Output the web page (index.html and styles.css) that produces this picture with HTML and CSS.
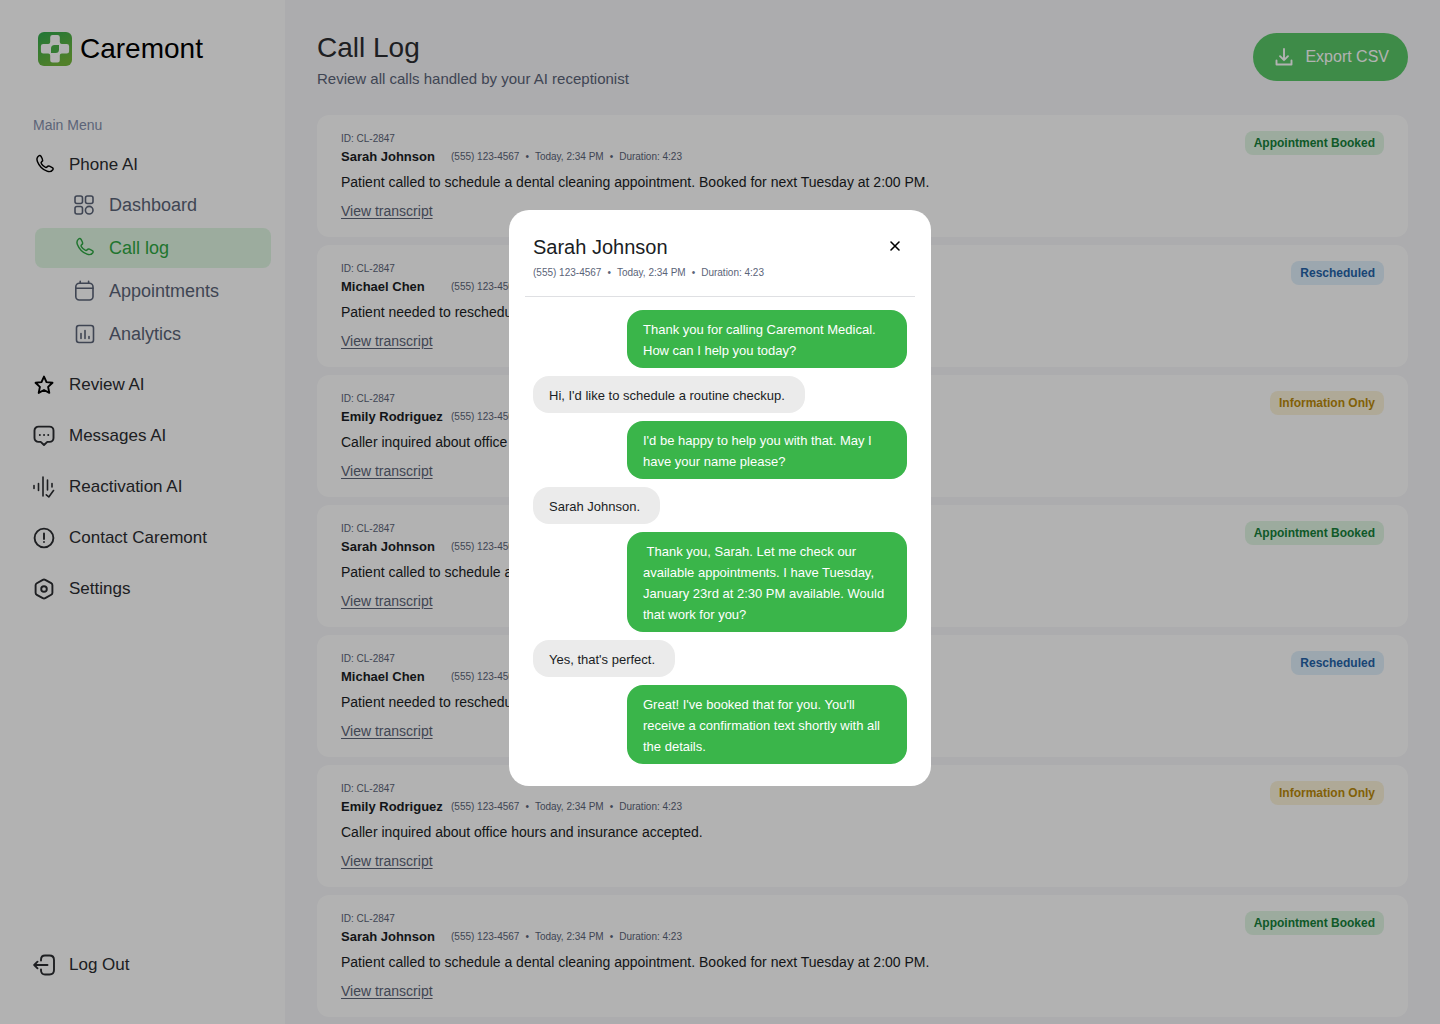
FILE: index.html
```html
<!DOCTYPE html>
<html lang="en">
<head>
<meta charset="utf-8">
<meta name="viewport" content="width=device-width, initial-scale=1">
<title>Caremont – Call Log</title>
<link rel="stylesheet" href="styles.css">
</head>
<body>
<svg class="sprite" aria-hidden="true">
  <symbol id="phone" viewBox="-2 0.5 24 24"><path d="M7.6 8.9C6.9 9.4 6.6 10.100 7.100 10.900C8.300 12.900 9.900 14.300 11.700 15.100C12.500 15.400 13 15.100 13.500 14.400C14.200 13.500 15 13.300 16 13.800L19 15.300C20 15.800 20.200 16.800 19.600 17.700C18.200 19.600 15.900 20.200 13.300 19.200C8.500 17.400 4.700 13.500 2.800 8.600C1.900 6.200 2.300 4.100 4.100 2.700C5.200 1.900 6.200 2.100 6.800 3.200L8.100 5.700C8.700 6.900 8.600 8.100 7.600 8.900Z"/></symbol>
</svg>

<div class="app">
  <aside class="sidebar">
    <a class="brand" href="#">
      <svg class="brand-mark" viewBox="0 0 34 34" aria-hidden="true">
        <defs><linearGradient id="leaf" x1="0" y1="0" x2="0.5" y2="1"><stop offset="0" stop-color="#2faa4e"/><stop offset="1" stop-color="#74b83c"/></linearGradient></defs>
        <rect width="34" height="34" rx="6" fill="url(#leaf)"/>
        <path fill="#fff" d="M14.500 3h5a2.300 2.300 0 0 1 2.300 2.300v4.700a2 2 0 0 0 2 2h5a2.300 2.300 0 0 1 2.300 2.300v5a2.300 2.300 0 0 1-2.300 2.300h-5a2 2 0 0 0-2 2v4.700a2.300 2.300 0 0 1-2.300 2.300h-5a2.300 2.300 0 0 1-2.300-2.300v-4.700a2 2 0 0 0-2-2h-5a2.300 2.300 0 0 1-2.300-2.300v-5a2.300 2.300 0 0 1 2.300-2.300h5a2 2 0 0 0 2-2V5.300a2.300 2.300 0 0 1 2.300-2.300z"/>
        <path fill="#4cb04a" d="M16.500 13h4.500v4.500a3.500 3.500 0 0 1-3.500 3.500H13v-4.500a3.500 3.500 0 0 1 3.500-3.500z"/>
      </svg>
      <span>Caremont</span>
    </a>

    <p class="menu-label">Main Menu</p>
    <nav class="nav" aria-label="Main Menu">
      <div class="nav-group">
        <a class="nav-item" href="#"><svg class="icon dark" viewBox="0 0 22 22"><use href="#phone"/></svg>Phone AI</a>
        <div class="subnav">
          <a class="sub-item" href="#"><svg class="icon" viewBox="0 0 22 22"><rect x="2" y="2" width="7.500" height="7.500" rx="2"/><rect x="12.500" y="2" width="7.500" height="7.500" rx="2"/><rect x="2" y="12.500" width="7.500" height="7.500" rx="2"/><circle cx="16.200" cy="16.200" r="3.800"/></svg>Dashboard</a>
          <a class="sub-item active" href="#" aria-current="page"><svg class="icon" viewBox="0 0 22 22"><use href="#phone"/></svg>Call log</a>
          <a class="sub-item" href="#"><svg class="icon" viewBox="0 0 22 22"><rect x="2.800" y="3.200" width="17.200" height="16.800" rx="3.500"/><path d="M3 8.200h17M7.200 1.200v2M15.600 1.200v2"/></svg>Appointments</a>
          <a class="sub-item" href="#"><svg class="icon" viewBox="0 0 22 22"><rect x="3.500" y="2.500" width="17" height="17" rx="2.500"/><path d="M8 10.500v5M12 7.500v8M16 13.500v2"/></svg>Analytics</a>
        </div>
      </div>
      <a class="nav-item" href="#"><svg class="icon dark bold" viewBox="0 0 22 22"><path d="M11 2.600l2.500 5.500 6 .7-4.400 4.100 1.200 6L11 16l-5.300 2.900 1.200-6L2.500 8.800l6-.7z"/></svg>Review AI</a>
      <a class="nav-item" href="#"><svg class="icon bold" viewBox="0 0 22 22"><path d="M5.500 1.600h11a4 4 0 0 1 4 4v7.300a4 4 0 0 1-4 4h-2.200L11 20l-3.300-3.100H5.500a4 4 0 0 1-4-4V5.600a4 4 0 0 1 4-4z"/><path d="M6.800 10h.1M11 10h.1M15.200 10h.1"/></svg>Messages AI</a>
      <a class="nav-item" href="#"><svg class="icon" viewBox="0 0 22 22"><path d="M1 9.500v3M5.500 7.500v7M10 1v19M14.500 4v10M19 7.500v3.500M13.300 18.800l2.500 2.200L20.500 14.500"/></svg>Reactivation AI</a>
      <a class="nav-item" href="#"><svg class="icon bold" viewBox="0 0 22 22"><circle cx="11" cy="11" r="9.400"/><path d="M11 6.500v5.500M11 15v.1"/></svg>Contact Caremont</a>
      <a class="nav-item" href="#"><svg class="icon bold" viewBox="0 0 22 22"><path d="M9.800 1.900a2.400 2.400 0 0 1 2.400 0l6 3.300a2.400 2.400 0 0 1 1.200 2.100v7.400a2.400 2.400 0 0 1-1.200 2.100l-6 3.300a2.400 2.400 0 0 1-2.400 0l-6-3.300a2.400 2.400 0 0 1-1.200-2.100V7.300a2.400 2.400 0 0 1 1.200-2.100z"/><circle cx="11" cy="11" r="2.800"/></svg>Settings</a>
    </nav>

    <a class="nav-item logout" href="#"><svg class="icon bold" viewBox="0 0 22 22"><path d="M8 6.500V5.800C8 3 9.500 1.500 12 1.500h4.500c3 0 4.500 1.500 4.500 4.500v10c0 3-1.500 4.500-4.500 4.500H12c-2.500 0-4-1.500-4-4.300v-.7M14.500 11H1.500M4.500 7.700L1.200 11l3.300 3.300"/></svg>Log Out</a>
  </aside>

  <main class="main">
    <header class="page-head">
      <div>
        <h1>Call Log</h1>
        <p>Review all calls handled by your AI receptionist</p>
      </div>
      <button class="export" type="button"><svg class="icon bold" viewBox="0 0 22 22"><path d="M11 3v11M7 10.200l4 4 4-4M3.500 14.500v4h15v-4"/></svg>Export CSV</button>
    </header>

    <section class="calls" aria-label="Calls">
      <article class="call">
        <div class="call-body">
          <p class="call-id">ID: CL-2847</p>
          <div class="call-top"><h2>Sarah Johnson</h2><p class="meta"><span>(555) 123-4567</span><span>•</span><span>Today, 2:34 PM</span><span>•</span><span>Duration: 4:23</span></p></div>
          <p class="summary">Patient called to schedule a dental cleaning appointment. Booked for next Tuesday at 2:00 PM.</p>
          <a class="transcript" href="#">View transcript</a>
        </div>
        <span class="badge booked">Appointment Booked</span>
      </article>
      <article class="call">
        <div class="call-body">
          <p class="call-id">ID: CL-2847</p>
          <div class="call-top"><h2>Michael Chen</h2><p class="meta"><span>(555) 123-4567</span><span>•</span><span>Today, 2:34 PM</span><span>•</span><span>Duration: 4:23</span></p></div>
          <p class="summary">Patient needed to reschedule appointment.</p>
          <a class="transcript" href="#">View transcript</a>
        </div>
        <span class="badge moved">Rescheduled</span>
      </article>
      <article class="call">
        <div class="call-body">
          <p class="call-id">ID: CL-2847</p>
          <div class="call-top"><h2>Emily Rodriguez</h2><p class="meta"><span>(555) 123-4567</span><span>•</span><span>Today, 2:34 PM</span><span>•</span><span>Duration: 4:23</span></p></div>
          <p class="summary">Caller inquired about office hours and insurance accepted.</p>
          <a class="transcript" href="#">View transcript</a>
        </div>
        <span class="badge info">Information Only</span>
      </article>
      <article class="call">
        <div class="call-body">
          <p class="call-id">ID: CL-2847</p>
          <div class="call-top"><h2>Sarah Johnson</h2><p class="meta"><span>(555) 123-4567</span><span>•</span><span>Today, 2:34 PM</span><span>•</span><span>Duration: 4:23</span></p></div>
          <p class="summary">Patient called to schedule a dental cleaning appointment. Booked for next Tuesday at 2:00 PM.</p>
          <a class="transcript" href="#">View transcript</a>
        </div>
        <span class="badge booked">Appointment Booked</span>
      </article>
      <article class="call">
        <div class="call-body">
          <p class="call-id">ID: CL-2847</p>
          <div class="call-top"><h2>Michael Chen</h2><p class="meta"><span>(555) 123-4567</span><span>•</span><span>Today, 2:34 PM</span><span>•</span><span>Duration: 4:23</span></p></div>
          <p class="summary">Patient needed to reschedule appointment.</p>
          <a class="transcript" href="#">View transcript</a>
        </div>
        <span class="badge moved">Rescheduled</span>
      </article>
      <article class="call">
        <div class="call-body">
          <p class="call-id">ID: CL-2847</p>
          <div class="call-top"><h2>Emily Rodriguez</h2><p class="meta"><span>(555) 123-4567</span><span>•</span><span>Today, 2:34 PM</span><span>•</span><span>Duration: 4:23</span></p></div>
          <p class="summary">Caller inquired about office hours and insurance accepted.</p>
          <a class="transcript" href="#">View transcript</a>
        </div>
        <span class="badge info">Information Only</span>
      </article>
      <article class="call">
        <div class="call-body">
          <p class="call-id">ID: CL-2847</p>
          <div class="call-top"><h2>Sarah Johnson</h2><p class="meta"><span>(555) 123-4567</span><span>•</span><span>Today, 2:34 PM</span><span>•</span><span>Duration: 4:23</span></p></div>
          <p class="summary">Patient called to schedule a dental cleaning appointment. Booked for next Tuesday at 2:00 PM.</p>
          <a class="transcript" href="#">View transcript</a>
        </div>
        <span class="badge booked">Appointment Booked</span>
      </article>
    </section>
  </main>
</div>

<div class="overlay">
  <section class="dialog" role="dialog" aria-modal="true" aria-labelledby="dialog-title">
    <header class="dialog-head">
      <div>
        <h2 id="dialog-title">Sarah Johnson</h2>
        <p class="meta"><span>(555) 123-4567</span><span>•</span><span>Today, 2:34 PM</span><span>•</span><span>Duration: 4:23</span></p>
      </div>
      <button class="close" type="button" aria-label="Close"><svg viewBox="0 0 24 24" aria-hidden="true"><path d="M8 8l8 8M16 8l-8 8"/></svg></button>
    </header>
    <div class="chat">
      <p class="bubble agent">Thank you for calling Caremont Medical. How can I help you today?</p>
      <p class="bubble caller">Hi, I'd like to schedule a routine checkup.</p>
      <p class="bubble agent">I'd be happy to help you with that. May I have your name please?</p>
      <p class="bubble caller">Sarah Johnson.</p>
      <p class="bubble agent">&nbsp;Thank you, Sarah. Let me check our available appointments. I have Tuesday, January 23rd at 2:30 PM available. Would that work for you?</p>
      <p class="bubble caller">Yes, that's perfect.</p>
      <p class="bubble agent">Great! I've booked that for you. You'll receive a confirmation text shortly with all the details.</p>
    </div>
  </section>
</div>
</body>
</html>
```

FILE: styles.css
```css
* { box-sizing: border-box; }

body {
  margin: 0;
  background: #f6f6f9;
  color: #1a1d24;
  font-family: "Liberation Sans", Arial, Helvetica, sans-serif;
  font-size: 14px;
}

h1, h2, p { margin: 0; font-weight: 400; }
a { color: inherit; text-decoration: none; }
button { border: 0; font: inherit; cursor: pointer; }

.sprite { display: none; }

.icon {
  flex: none;
  width: 22px;
  height: 22px;
  fill: none;
  stroke: currentColor;
  stroke-width: 1.6;
  stroke-linecap: round;
  stroke-linejoin: round;
}
.icon.dark { color: #000; }
.icon.bold { stroke-width: 1.9; }

.app { display: flex; min-height: 100vh; }

/* Sidebar */
.sidebar {
  display: flex;
  flex-direction: column;
  flex: none;
  width: 285px;
  padding: 32px 14px 39px 33px;
  background: #fff;
}
.brand {
  display: flex;
  align-items: center;
  gap: 8px;
  margin-left: 5px;
  height: 34px;
  color: #000;
  font-size: 28px;
}
.brand-mark { width: 34px; height: 34px; }
.menu-label {
  margin: 49px 0 10px;
  color: #8590ad;
  line-height: 20px;
}
.nav { display: flex; flex-direction: column; gap: 11px; }
.nav-item, .sub-item {
  display: flex;
  align-items: center;
  gap: 14px;
  height: 40px;
}
.nav-item { color: #2b2d31; font-size: 17px; }
.subnav {
  display: flex;
  flex-direction: column;
  gap: 3px;
  margin-left: 2px;
}
.sub-item {
  padding-left: 38px;
  border-radius: 8px;
  color: #5b6478;
  font-size: 18px;
}
.sub-item.active { background: #e0f7e3; color: #2fa843; }
.logout { margin-top: auto; }

/* Page */
.main { flex: 1; min-width: 0; padding: 33px 32px 7px; }
.page-head {
  display: flex;
  justify-content: space-between;
  align-items: flex-start;
  margin-bottom: 24px;
}
.page-head h1 { color: #2b2d31; font-size: 28px; line-height: 30px; }
.page-head p { margin-top: 4px; color: #5b6478; font-size: 15px; line-height: 24px; }
.export {
  display: flex;
  align-items: center;
  gap: 10px;
  height: 48px;
  padding: 0 19px 0 20px;
  border-radius: 24px;
  background: #59c868;
  color: #fff;
  font-size: 16px;
}

.calls { display: flex; flex-direction: column; gap: 8px; }
.call {
  display: flex;
  justify-content: space-between;
  align-items: flex-start;
  padding: 16px 24px;
  border-radius: 12px;
  background: #fff;
}
.call-id { color: #5b6478; font-size: 10px; line-height: 16px; }
.call-top { display: flex; align-items: center; }
.call-top h2 { width: 110px; font-size: 13px; font-weight: 700; line-height: 20px; }
.meta {
  display: flex;
  gap: 6px;
  color: #5b6478;
  font-size: 10px;
  line-height: 16px;
}
.summary { margin: 4px 0 8px; font-size: 14px; line-height: 22px; }
.transcript {
  display: block;
  width: fit-content;
  color: #5b6478;
  line-height: 20px;
  text-decoration: underline;
  text-underline-offset: 2px;
}
.badge {
  padding: 0 9px;
  border-radius: 8px;
  font-size: 12px;
  font-weight: 700;
  line-height: 24px;
}
.booked { background: #e0f5e3; color: #16803a; }
.moved { background: #e0effb; color: #2563a8; }
.info { background: #fbf2d9; color: #b98a0b; }

/* Transcript dialog */
.overlay {
  position: fixed;
  inset: 0;
  display: flex;
  align-items: center;
  justify-content: center;
  padding-bottom: 28px;
  background: rgba(0, 0, 0, 0.3);
}
.dialog {
  width: 422px;
  padding: 24px 16px 22px;
  border-radius: 20px;
  background: #fff;
}
.dialog-head {
  display: flex;
  justify-content: space-between;
  align-items: flex-start;
  padding: 0 8px 15px;
  border-bottom: 1px solid #dfe0e3;
}
.dialog-head h2 { margin-bottom: 5px; font-size: 20px; line-height: 26px; }
.close { padding: 0; width: 24px; height: 24px; background: none; }
.close svg {
  display: block;
  width: 24px;
  height: 24px;
  stroke: #000;
  stroke-width: 1.6;
  stroke-linecap: round;
}
.chat {
  display: flex;
  flex-direction: column;
  gap: 8px;
  padding: 13px 8px 0;
}
.bubble {
  max-width: 280px;
  padding: 9px 16px 7px;
  border-radius: 16px;
  font-size: 13px;
  line-height: 21px;
}
.agent { align-self: flex-end; width: 280px; background: #3ab54a; color: #fff; }
.caller { align-self: flex-start; padding-right: 20px; background: #ebebeb; }
```
